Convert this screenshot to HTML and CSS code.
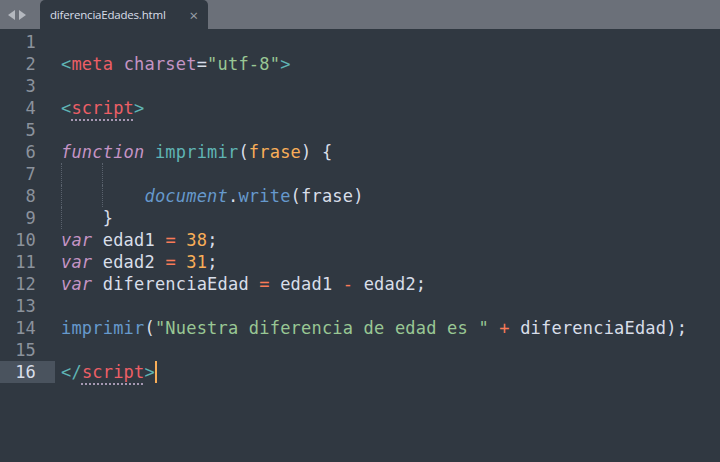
FILE: index.html
```html
<!DOCTYPE html>
<html lang="es">
<head>
<meta charset="UTF-8">
<title>diferenciaEdades.html</title>
<link rel="stylesheet" href="styles.css">
</head>
<body>
  <div class="tabbar">
    <div class="arrows">
      <svg width="22" height="12" viewBox="0 0 22 12">
        <polygon points="9,1 9,11 2,6" fill="#b4b8bf"/>
        <polygon points="13,1 13,11 20,6" fill="#b4b8bf"/>
      </svg>
    </div>
    <div class="tab">
      <span class="tab-title">diferenciaEdades.html</span>
      <span class="tab-close">&times;</span>
    </div>
  </div>

  <div class="editor">
    <div class="row"><span class="num">1</span><span class="code"></span></div>
    <div class="row"><span class="num">2</span><span class="code"><span class="pu">&lt;</span><span class="tg">meta</span> <span class="at">charset</span><span class="pl">=</span><span class="st">"utf-8"</span><span class="pu">&gt;</span></span></div>
    <div class="row"><span class="num">3</span><span class="code"></span></div>
    <div class="row"><span class="num">4</span><span class="code"><span class="pu">&lt;</span><span class="tg match">script</span><span class="pu">&gt;</span></span></div>
    <div class="row"><span class="num">5</span><span class="code"></span></div>
    <div class="row"><span class="num">6</span><span class="code"><span class="kw">function</span> <span class="fn">imprimir</span><span class="pl">(</span><span class="pa">frase</span><span class="pl">) {</span></span></div>
    <div class="row"><span class="num">7</span><span class="code"><span class="guide"></span><span class="guide g2"></span></span></div>
    <div class="row"><span class="num">8</span><span class="code"><span class="guide"></span><span class="guide g2"></span>        <span class="ob">document</span><span class="pl">.</span><span class="fn2">write</span><span class="pl">(frase)</span></span></div>
    <div class="row"><span class="num">9</span><span class="code"><span class="guide"></span>    <span class="pl">}</span></span></div>
    <div class="row"><span class="num">10</span><span class="code"><span class="kw">var</span> <span class="pl">edad1</span> <span class="op">=</span> <span class="nu">38</span><span class="pl">;</span></span></div>
    <div class="row"><span class="num">11</span><span class="code"><span class="kw">var</span> <span class="pl">edad2</span> <span class="op">=</span> <span class="nu">31</span><span class="pl">;</span></span></div>
    <div class="row"><span class="num">12</span><span class="code"><span class="kw">var</span> <span class="pl">diferenciaEdad</span> <span class="op">=</span> <span class="pl">edad1</span> <span class="op">-</span> <span class="pl">edad2;</span></span></div>
    <div class="row"><span class="num">13</span><span class="code"></span></div>
    <div class="row"><span class="num">14</span><span class="code"><span class="fn2">imprimir</span><span class="pl">(</span><span class="st">"Nuestra diferencia de edad es "</span> <span class="op">+</span> <span class="pl">diferenciaEdad);</span></span></div>
    <div class="row"><span class="num">15</span><span class="code"></span></div>
    <div class="row current"><span class="num">16</span><span class="code"><span class="pu">&lt;/</span><span class="tg match">script</span><span class="pu">&gt;</span><span class="cursor"></span></span></div>
  </div>
</body>
</html>
```

FILE: styles.css
```css
/* Mariana-like editor */
body {
  margin: 0;
  padding: 0;
  background-color: #303841;
  font-family: "DejaVu Sans Mono", monospace;
  height: 462px;
  overflow: hidden;
}

.tabbar {
  display: flex;
  align-items: flex-end;
  height: 29px;
  background-color: #6b7079;
}

.arrows {
  width: 40px;
  height: 29px;
  display: flex;
  align-items: center;
  padding-left: 6px;
  box-sizing: border-box;
}

.tab {
  display: flex;
  align-items: center;
  justify-content: space-between;
  width: 168px;
  height: 29px;
  padding: 0 10px 0 10px;
  box-sizing: border-box;
  background-color: #303841;
  border-radius: 5px 5px 0 0;
  font-family: "Open Sans", "Liberation Sans", sans-serif;
}

.tab-title {
  font-size: 11.5px;
  color: #d8dee9;
  letter-spacing: -0.2px;
}

.tab-close {
  font-size: 15px;
  color: #9aa0a8;
}

.editor {
  padding-top: 2px;
  font-size: 17px;
  letter-spacing: 0.2px;
}

.row {
  display: flex;
  height: 22px;
  line-height: 22px;
}

.num {
  width: 36px;
  text-align: right;
  color: #8b929c;
  padding-right: 19px;
  flex-shrink: 0;
}

.current .num {
  background-color: #4a535e;
  color: #d8dee9;
}

.code {
  position: relative;
  padding-left: 6px;
  white-space: pre;
  color: #d8dee9;
}

.guide {
  position: absolute;
  left: 6px;
  top: 0;
  height: 22px;
  border-left: 1px dotted #5a626d;
}

.guide.g2 {
  left: 47px;
}

.cursor {
  display: inline-block;
  width: 2px;
  height: 22px;
  vertical-align: top;
  background-color: #f9ae58;
}

.pu { color: #5fb4b4; }
.tg { color: #ec5f66; }
.at { color: #c594c5; }
.st { color: #99c794; }
.pl { color: #d8dee9; }
.kw { color: #c594c5; font-style: italic; }
.fn { color: #5fb4b4; }
.fn2 { color: #6699cc; }
.ob { color: #6699cc; font-style: italic; }
.pa { color: #f9ae58; }
.nu { color: #f9ae58; }
.op { color: #f97b58; }

.match {
  text-decoration: underline dotted #b9a9c6;
  text-underline-offset: 6px;
}
```
